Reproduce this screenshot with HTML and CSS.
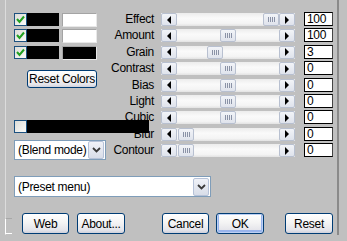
FILE: index.html
```html
<!DOCTYPE html>
<html lang="en">
  <head>
    <meta charset="UTF-8" />
    <title>Filter settings</title>
    <link rel="stylesheet" href="styles.css">
  </head>
  <body>
    <div class="frame">
      <div class="top">
        <!-- colour chips -->
        <div class="left">
          <div class="color-row">
            <span class="chip"><span class="check"><svg width="11" height="11" viewBox="0 0 11 11"><polyline points="2,5 4.5,8 9,2.5" /></svg></span></span>
            <span class="swatch"></span>
          </div>
          <div class="color-row">
            <span class="chip"><span class="check"><svg width="11" height="11" viewBox="0 0 11 11"><polyline points="2,5 4.5,8 9,2.5" /></svg></span></span>
            <span class="swatch"></span>
          </div>
          <div class="color-row">
            <span class="chip"><span class="check"><svg width="11" height="11" viewBox="0 0 11 11"><polyline points="2,5 4.5,8 9,2.5" /></svg></span></span>
            <span class="swatch dark"></span>
          </div>
          <button class="btn reset-colors">Reset Colors</button>
          <div class="blackbar"><span class="mini"></span></div>
          <div class="select blend">
            <span class="select-text">(Blend mode)</span>
            <span class="drop"><svg width="9" height="6" viewBox="0 0 9 6"><polyline points="1,1 4.5,4.5 8,1" /></svg></span>
          </div>
        </div>

        <!-- sliders -->
        <div class="sliders">
          <div class="row">
            <span class="label">Effect</span>
            <div class="slider"><span class="arrow"><i class="tri-left"></i></span><span class="track"><span class="thumb" style="margin-left: 86px"></span></span><span class="arrow"><i class="tri-right"></i></span></div>
            <span class="num">100</span>
          </div>
          <div class="row">
            <span class="label">Amount</span>
            <div class="slider"><span class="arrow"><i class="tri-left"></i></span><span class="track"><span class="thumb" style="margin-left: 43px"></span></span><span class="arrow"><i class="tri-right"></i></span></div>
            <span class="num">100</span>
          </div>
          <div class="row">
            <span class="label">Grain</span>
            <div class="slider"><span class="arrow"><i class="tri-left"></i></span><span class="track"><span class="thumb" style="margin-left: 30px"></span></span><span class="arrow"><i class="tri-right"></i></span></div>
            <span class="num">3</span>
          </div>
          <div class="row">
            <span class="label">Contrast</span>
            <div class="slider"><span class="arrow"><i class="tri-left"></i></span><span class="track"><span class="thumb" style="margin-left: 43px"></span></span><span class="arrow"><i class="tri-right"></i></span></div>
            <span class="num">0</span>
          </div>
          <div class="row">
            <span class="label">Bias</span>
            <div class="slider"><span class="arrow"><i class="tri-left"></i></span><span class="track"><span class="thumb" style="margin-left: 43px"></span></span><span class="arrow"><i class="tri-right"></i></span></div>
            <span class="num">0</span>
          </div>
          <div class="row">
            <span class="label">Light</span>
            <div class="slider"><span class="arrow"><i class="tri-left"></i></span><span class="track"><span class="thumb" style="margin-left: 43px"></span></span><span class="arrow"><i class="tri-right"></i></span></div>
            <span class="num">0</span>
          </div>
          <div class="row">
            <span class="label">Cubic</span>
            <div class="slider"><span class="arrow"><i class="tri-left"></i></span><span class="track"><span class="thumb" style="margin-left: 43px"></span></span><span class="arrow"><i class="tri-right"></i></span></div>
            <span class="num">0</span>
          </div>
          <div class="row">
            <span class="label">Blur</span>
            <div class="slider"><span class="arrow"><i class="tri-left"></i></span><span class="track"><span class="thumb" style="margin-left: 1px"></span></span><span class="arrow"><i class="tri-right"></i></span></div>
            <span class="num">0</span>
          </div>
          <div class="row">
            <span class="label">Contour</span>
            <div class="slider"><span class="arrow"><i class="tri-left"></i></span><span class="track"><span class="thumb" style="margin-left: 1px"></span></span><span class="arrow"><i class="tri-right"></i></span></div>
            <span class="num">0</span>
          </div>
        </div>
      </div>

      <div class="select preset">
        <span class="select-text">(Preset menu)</span>
        <span class="drop"><svg width="9" height="6" viewBox="0 0 9 6"><polyline points="1,1 4.5,4.5 8,1" /></svg></span>
      </div>

      <div class="buttons">
        <span class="bracket"></span>
        <button class="btn web">Web</button>
        <button class="btn about">About...</button>
        <button class="btn cancel">Cancel</button>
        <button class="btn ok">OK</button>
        <button class="btn reset">Reset</button>
      </div>
    </div>
  </body>
</html>
```

FILE: styles.css
```css
body {
  margin: 0;
  width: 347px;
  height: 241px;
  overflow: hidden;
  background-color: #c0c0c0;
  font-family: "Liberation Sans", Arial, sans-serif;
  font-size: 12px;
  letter-spacing: -0.3px;
  color: #000;
}

.frame {
  box-sizing: border-box;
  margin-left: 5px;
  width: 334px;
  height: 235px;
  padding: 12px 4px 0 8px;
  border-left: 1px solid #dcdcdc;
  border-right: 2px solid #8a8a8a;
}

.top {
  display: flex;
}

/* Left column */
.left {
  width: 92px;
  display: flex;
  flex-direction: column;
  padding-top: 1px;
}

.color-row {
  display: flex;
  gap: 3px;
  height: 13px;
  margin-bottom: 3.4px;
}

.chip {
  width: 45px;
  background-color: #000;
}

.check {
  box-sizing: border-box;
  display: flex;
  align-items: center;
  justify-content: center;
  width: 13px;
  height: 13px;
  border: 1px solid #1c5180;
  background: linear-gradient(135deg, #dcdcd7, #fbfbf9);
}

.check polyline {
  fill: none;
  stroke: #21a121;
  stroke-width: 2;
}

.swatch {
  box-sizing: border-box;
  width: 35px;
  height: 14px;
  border: 1px solid #a4a4a4;
  border-right-color: #e8e8e8;
  border-bottom-color: #e8e8e8;
  background-color: #fff;
}

.swatch.dark {
  background-color: #000;
}

.btn {
  box-sizing: border-box;
  padding: 0;
  font-family: inherit;
  font-size: 12px;
  letter-spacing: -0.3px;
  white-space: nowrap;
  color: #000;
  border: 1px solid #003c74;
  border-radius: 3px;
  background: linear-gradient(#ffffff, #f4f4f4 45%, #e4e4ea 85%, #cfd0da);
}

.reset-colors {
  margin: 8px 0 0 13px;
  width: 70px;
  height: 18px;
}

.blackbar {
  position: relative;
  z-index: 1;
  display: flex;
  margin-top: 32px;
  width: 135px;
  height: 13px;
  background-color: #000;
}

.mini {
  box-sizing: border-box;
  width: 13px;
  height: 13px;
  border: 1px solid #1c5180;
  background: linear-gradient(135deg, #dcdcd7, #fbfbf9);
}

.select {
  box-sizing: border-box;
  display: flex;
  align-items: center;
  height: 20px;
  border: 1px solid #7f9db9;
  background-color: #fff;
}

.select-text {
  flex: 1;
  padding-left: 3px;
  white-space: nowrap;
}

.drop {
  box-sizing: border-box;
  display: flex;
  align-items: center;
  justify-content: center;
  width: 16px;
  height: 18px;
  margin-right: 1px;
  border: 1px solid #b6c2d8;
  border-radius: 2px;
  background: linear-gradient(#f0f2f8, #d8dde8);
}

.drop polyline {
  fill: none;
  stroke: #3a3a3a;
  stroke-width: 1.8;
}

.blend {
  margin-top: 7px;
  width: 92px;
}

/* Sliders */
.sliders {
  display: flex;
  flex-direction: column;
  gap: 2.4px;
}

.row {
  display: flex;
  height: 14px;
}

.label {
  width: 48px;
  margin-right: 7px;
  text-align: right;
  line-height: 15px;
  white-space: nowrap;
}

.slider {
  display: flex;
  width: 134px;
  height: 13px;
  margin-top: 1px;
  background: linear-gradient(#ececec, #fafafa 40%, #f4f4f4 80%, #e2e2e2);
}

.arrow,
.thumb {
  box-sizing: border-box;
  display: flex;
  align-items: center;
  justify-content: center;
  width: 16px;
  height: 13px;
  border: 1px solid #b8c0d0;
  border-radius: 2px;
  background: linear-gradient(#f2f4f8, #dfe3ec);
}

.track {
  flex: 1;
  display: flex;
}

.thumb::before {
  content: "";
  width: 7px;
  height: 5px;
  background: repeating-linear-gradient(90deg, #8a92a6 0 1px, transparent 1px 2px);
}

.tri-left {
  border-right: 4px solid #000;
  border-top: 4px solid transparent;
  border-bottom: 4px solid transparent;
}

.tri-right {
  border-left: 4px solid #000;
  border-top: 4px solid transparent;
  border-bottom: 4px solid transparent;
}

.num {
  box-sizing: border-box;
  width: 29px;
  height: 14px;
  margin-left: 9px;
  padding-left: 2px;
  line-height: 13px;
  border: 1px solid #000;
  border-right-color: #444;
  background-color: #fff;
}

/* Bottom */
.preset {
  margin-top: 16px;
  width: 197px;
  height: 21px;
}

.buttons {
  display: flex;
  margin-top: 16px;
  height: 21px;
}

.bracket {
  box-sizing: border-box;
  margin: 5px 0 0 -9px;
  width: 7px;
  height: 16px;
  border-top: 1px solid #a8a8a8;
  border-left: 1px solid #fff;
  border-bottom: 1px solid #fff;
}

.web {
  margin-left: 10px;
  width: 47px;
}

.about {
  margin-left: 8px;
  width: 48px;
}

.cancel {
  margin-left: 37px;
  width: 47px;
}

.ok {
  margin-left: 7px;
  width: 48px;
  box-shadow: inset 0 0 0 1px #bcd0f4, inset 0 -1px 0 2px #98b4ec;
}

.reset {
  margin-left: 21px;
  width: 48px;
}
```
